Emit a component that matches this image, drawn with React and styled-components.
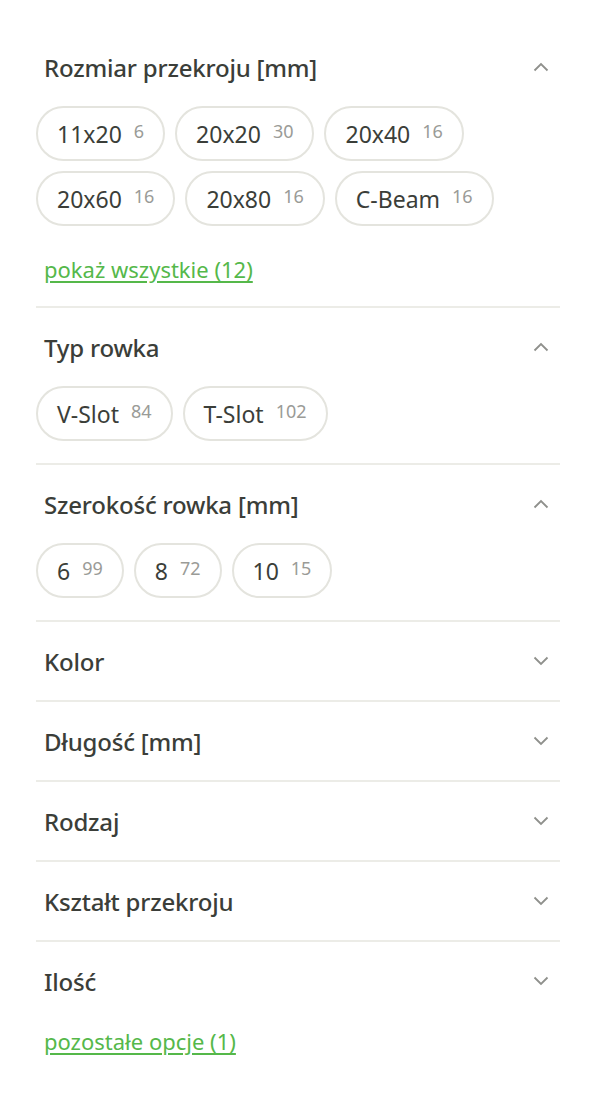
import React from 'react';
import styled, { createGlobalStyle } from 'styled-components';

const GlobalStyle = createGlobalStyle`
    body {
        margin: 0;
        background: #fff;
        font-family: 'Noto Sans', 'Open Sans', sans-serif;
        color: #3b3e39;
    }
`;

const Wrapper = styled.div`
    width: 596px;
    padding: 28px 36px 40px;
    box-sizing: border-box;
`;
const Section = styled.section`
    border-bottom: ${props => props.last ? 'none' : '2px solid #ecece7'};
    padding-bottom: ${props => props.open ? '22px' : '0'};
`;
const Header = styled.div`
    height: 78px;
    display: flex;
    align-items: center;
    justify-content: space-between;
    padding: 0 11px 0 8px;
    cursor: pointer;
    >h2{
        margin: 0;
        font-size: 24px;
        font-weight: 500;
        letter-spacing: -0.2px;
        color: #3b3e39;
    }
`;
const Chips = styled.div`
    display: flex;
    flex-wrap: wrap;
    gap: 10px;
`;
const Chip = styled.button`
    height: 55px;
    display: inline-flex;
    align-items: center;
    gap: 12px;
    padding: 0 19px;
    border: 2px solid #e4e4de;
    border-radius: 28px;
    background: #fff;
    font-family: inherit;
    font-size: 23px;
    color: #3b3e39;
    cursor: pointer;
    >span{
        font-size: 18px;
        color: #9a9b97;
        position: relative;
        top: -3px;
    }
`;
const Link = styled.a`
    display: inline-block;
    margin: ${props => props.top}px 0 0 8px;
    font-size: 22px;
    line-height: 30px;
    color: #55b84a;
    text-decoration: underline;
    text-underline-offset: 3px;
    cursor: pointer;
`;

const Chevron = ({ up }) => (
    <svg width="16" height="10" viewBox="0 0 16 10" fill="none">
        <path d={up ? 'M1.5 8.5 L8 2 L14.5 8.5' : 'M1.5 1.5 L8 8 L14.5 1.5'} stroke="#8f908c" strokeWidth="1.8" />
    </svg>
);

const sections = [
    {
        title: 'Rozmiar przekroju [mm]',
        open: true,
        items: [['11x20', 6], ['20x20', 30], ['20x40', 16], ['20x60', 16], ['20x80', 16], ['C-Beam', 16]],
        more: 'pokaż wszystkie (12)'
    },
    { title: 'Typ rowka', open: true, items: [['V-Slot', 84], ['T-Slot', 102]] },
    { title: 'Szerokość rowka [mm]', open: true, items: [['6', 99], ['8', 72], ['10', 15]] },
    { title: 'Kolor' },
    { title: 'Długość [mm]' },
    { title: 'Rodzaj' },
    { title: 'Kształt przekroju' },
    { title: 'Ilość', last: true }
];

const App = () => (
    <Wrapper>
        <GlobalStyle />
        {sections.map(s => (
            <Section key={s.title} open={s.open} last={s.last}>
                <Header>
                    <h2>{s.title}</h2>
                    <Chevron up={s.open} />
                </Header>
                {s.items && (
                    <Chips>
                        {s.items.map(([label, count]) => (
                            <Chip key={label}>{label}<span>{count}</span></Chip>
                        ))}
                    </Chips>
                )}
                {s.more && <Link top={28}>{s.more}</Link>}
            </Section>
        ))}
        <Link top={6}>pozostałe opcje (1)</Link>
    </Wrapper>
);

export default App;
